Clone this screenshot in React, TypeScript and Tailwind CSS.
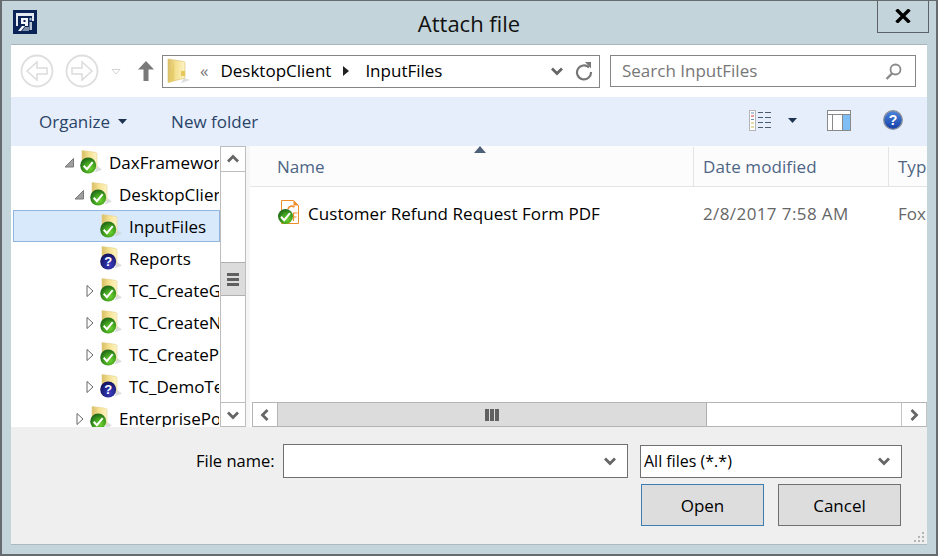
const FONT = "font-['Open_Sans','Noto_Sans',sans-serif]";

function Gradients() {
  return (
    <svg width="0" height="0" className="absolute">
      <defs>
        <radialGradient id="okFill" cx="0.62" cy="0.68" r="0.7">
          <stop offset="0" stopColor="#6fd02e" />
          <stop offset="0.55" stopColor="#3f9f1e" />
          <stop offset="1" stopColor="#1d6418" />
        </radialGradient>
        <radialGradient id="askFill" cx="0.6" cy="0.7" r="0.7">
          <stop offset="0" stopColor="#3a3cc0" />
          <stop offset="1" stopColor="#12125e" />
        </radialGradient>
        <linearGradient id="folderFill" x1="0" y1="0" x2="1" y2="0">
          <stop offset="0" stopColor="#d8bd63" />
          <stop offset="0.45" stopColor="#f5e08e" />
          <stop offset="1" stopColor="#fdf4c6" />
        </linearGradient>
        <linearGradient id="helpFill" x1="0" y1="0" x2="0" y2="1">
          <stop offset="0" stopColor="#4f86dc" />
          <stop offset="1" stopColor="#143fa8" />
        </linearGradient>
      </defs>
    </svg>
  );
}

function Badge({ kind, cx = 8.2, cy = 15.5, r = 8 }: { kind: "ok" | "unknown"; cx?: number; cy?: number; r?: number }) {
  if (kind === "ok") {
    return (
      <g>
        <circle cx={cx} cy={cy} r={r} fill="url(#okFill)" />
        <path
          d={`M${cx - 4.5} ${cy + 0.3}l3.200 3.400 5.800-7`}
          fill="none"
          stroke="#fff"
          strokeWidth="2"
        />
      </g>
    );
  }
  return (
    <g>
      <circle cx={cx} cy={cy} r={r} fill="url(#askFill)" />
      <text x={cx} y={cy + 4.6} textAnchor="middle" fontSize="13" fontWeight="700" fill="#fff" fontFamily="Liberation Sans, sans-serif">
        ?
      </text>
    </g>
  );
}

function FolderBadge({ kind }: { kind: "ok" | "unknown" }) {
  return (
    <svg width="24" height="26" viewBox="0 0 24 26" className="shrink-0">
      <path d="M17 16l5 3.500-7 3z" fill="#cfcfcf" opacity="0.7" />
      <path d="M2 0.500l8 1c4 .5 7 1 7 2V18l-15 3z" fill="url(#folderFill)" stroke="#e3d08e" strokeWidth="0.6" />
      <path d="M6 1.500v19" stroke="#e6d28c" strokeWidth="0.8" opacity="0.7" />
      <Badge kind={kind} />
    </svg>
  );
}

type Row = { label: string; kind: "ok" | "unknown"; arrow?: "open" | "closed"; level: string; selected?: boolean };

const rows: Row[] = [
  { label: "DaxFramework", kind: "ok", arrow: "open", level: "pl-[50px]" },
  { label: "DesktopClient", kind: "ok", arrow: "open", level: "pl-[60px]" },
  { label: "InputFiles", kind: "ok", level: "pl-[70px]", selected: true },
  { label: "Reports", kind: "unknown", level: "pl-[70px]" },
  { label: "TC_CreateGeneral", kind: "ok", arrow: "closed", level: "pl-[70px]" },
  { label: "TC_CreateNew", kind: "ok", arrow: "closed", level: "pl-[70px]" },
  { label: "TC_CreateProject", kind: "ok", arrow: "closed", level: "pl-[70px]" },
  { label: "TC_DemoTest", kind: "unknown", arrow: "closed", level: "pl-[70px]" },
  { label: "EnterprisePortal", kind: "ok", arrow: "closed", level: "pl-[60px]" },
];

function TreeArrow({ type }: { type?: "open" | "closed" }) {
  if (type === "open") {
    return (
      <svg width="12" height="12" viewBox="0 0 12 12" className="shrink-0">
        <path d="M9.500 1.500v8.500H1z" fill="#a0a0a0" stroke="#777" />
      </svg>
    );
  }
  if (type === "closed") {
    return (
      <svg width="12" height="14" viewBox="0 0 12 14" className="shrink-0">
        <path d="M3 1.500l6 5.500-6 5.500z" fill="#fff" stroke="#666" />
      </svg>
    );
  }
  return <span className="w-3 shrink-0" />;
}

function TreeRow({ row }: { row: Row }) {
  return (
    <div
      className={
        "flex h-8 shrink-0 items-center gap-[4px] overflow-hidden whitespace-nowrap border pt-[2px] " +
        row.level +
        (row.selected ? " border-[#8fb5e0] bg-[#d9e9fc]" : " border-transparent")
      }
    >
      <TreeArrow type={row.arrow} />
      <FolderBadge kind={row.kind} />
      <span className="ml-[1px] text-[17px] text-black">{row.label}</span>
    </div>
  );
}

function Chevron({ dir = "down", size = 16 }: { dir?: "down" | "up" | "left" | "right"; size?: number }) {
  const d = {
    down: "M3 5.500l5 5 5-5",
    up: "M3 10.500l5-5 5 5",
    left: "M10.500 3L5.500 8l5 5",
    right: "M5.500 3l5 5-5 5",
  }[dir];
  return (
    <svg width={size} height={size} viewBox="0 0 16 16" className="shrink-0">
      <path d={d} fill="none" stroke="#666" strokeWidth="2.800" />
    </svg>
  );
}

function ScrollGrip({ vertical }: { vertical?: boolean }) {
  return vertical ? (
    <div className="flex flex-col gap-[2px]">
      <div className="h-[3px] w-[12px] bg-[#606060]" />
      <div className="h-[3px] w-[12px] bg-[#606060]" />
      <div className="h-[3px] w-[12px] bg-[#606060]" />
    </div>
  ) : (
    <div className="flex gap-[1px]">
      <div className="h-[12px] w-[4px] bg-[#606060]" />
      <div className="h-[12px] w-[4px] bg-[#606060]" />
      <div className="h-[12px] w-[4px] bg-[#606060]" />
    </div>
  );
}

function NavCircle({ flip }: { flip?: boolean }) {
  return (
    <svg width="34" height="34" viewBox="0 0 34 34" className="shrink-0">
      <circle cx="17" cy="17" r="15.500" fill="#fff" stroke="#dedede" strokeWidth="1.800" />
      <path
        d={flip ? "M7 14h10V8l10 9-10 9v-6H7z" : "M27 14H17V8L7 17l10 9v-6h10z"}
        fill="#fff"
        stroke="#dcdcdc"
        strokeWidth="1.500"
      />
    </svg>
  );
}

function Logo() {
  return (
    <svg width="24" height="24" viewBox="0 0 24 24" className="shrink-0">
      <rect width="24" height="24" fill="#0b2458" />
      <path d="M3 3h18v3H3zM3 6h2v10H3zM19 6h2v5h-2z" fill="#e4e9f2" />
      <path d="M8 8h7v8h-3l-4 5H5l4-5h3v-2H8zM10.500 10v2H12.500v-2z" fill="#f4f6fa" fillRule="evenodd" />
      <path d="M16.500 8h2v2.500h-2zM16.500 12h2.500v8h-2.500z" fill="#b9c4d6" />
      <path d="M12 17h4v4h-7z" fill="#7f8fa8" />
    </svg>
  );
}

function ViewIcon() {
  return (
    <svg width="23" height="21" viewBox="0 0 23 21" className="shrink-0">
      <rect x="0.500" y="0.500" width="6" height="20" fill="#fff" stroke="#b5b5b5" />
      <path d="M2 3h3" stroke="#6b8fb5" />
      <path d="M2 6h3" stroke="#d33" />
      <path d="M2 9.500h3" stroke="#6b8fb5" />
      <path d="M2 13h3" stroke="#c9b94a" />
      <path d="M2 17h3" stroke="#c9b94a" />
      <path d="M9 2.500h5M16 2.500h6M9 7.500h5M16 7.500h6M9 12.500h5M16 12.500h6M9 17.500h5M16 17.500h6" stroke="#4b5c70" strokeWidth="1" />
    </svg>
  );
}

function PaneIcon() {
  return (
    <svg width="24" height="21" viewBox="0 0 24 21" className="shrink-0">
      <rect x="0.500" y="0.500" width="23" height="20" fill="#fff" stroke="#8a8a8a" />
      <path d="M1 4.500h22" stroke="#8a8a8a" />
      <path d="M5.500 5v15M15.500 5v15" stroke="#8a8a8a" />
      <rect x="16" y="5" width="7" height="15" fill="#7fbdf5" />
    </svg>
  );
}

function HelpIcon() {
  return (
    <svg width="20" height="20" viewBox="0 0 20 20" className="shrink-0">
      <circle cx="10" cy="10" r="9.300" fill="url(#helpFill)" stroke="#8c9199" strokeWidth="1.300" />
      <text x="10" y="15" textAnchor="middle" fontSize="14" fontWeight="700" fill="#fff" fontFamily="Liberation Sans, sans-serif">
        ?
      </text>
    </svg>
  );
}

function PdfIcon() {
  return (
    <svg width="24" height="26" viewBox="0 0 24 26" className="mb-[2px] shrink-0">
      <path d="M4.500 .500h12l5 5v18h-17z" fill="#fff" stroke="#ee8f2a" />
      <path d="M16.500 .500v5h5z" fill="#ee8f2a" />
      <path d="M11 9c1-3 4-3.500 6.500-2" fill="none" stroke="#ee8f2a" strokeWidth="1.600" />
      <path d="M16.500 21v-8h4M16.500 17h3" fill="none" stroke="#ee8f2a" strokeWidth="1.200" />
      <Badge kind="ok" cx={8.5} cy={16.5} r={7.5} />
    </svg>
  );
}

function Grip() {
  return (
    <svg width="11" height="11" viewBox="0 0 11 11">
      <path d="M8 0h2v2H8zM4 4h2v2H4zM8 4h2v2H8zM0 8h2v2H0zM4 8h2v2H4zM8 8h2v2H8z" fill="#b4b4b4" />
    </svg>
  );
}

export default function App() {
  return (
    <div className={"flex h-[556px] w-[938px] flex-col overflow-hidden border-x-2 border-t border-b-2 border-[#666b70] bg-[#c3d5db] " + FONT}>
      <Gradients />

      {/* title bar */}
      <div className="grid h-[43px] shrink-0 grid-cols-[1fr_auto_1fr]">
        <div className="pl-[11px] pt-[9px]">
          <Logo />
        </div>
        <div className="pt-[7px] text-[22px] leading-[30px] text-[#111]">Attach file</div>
        <div className="flex justify-end">
          <div className="mr-[7px] flex h-[32px] w-[52px] items-start justify-center border-x border-b border-[#5c6268] pt-[8px]">
            <svg width="16" height="14" viewBox="0 0 16 14">
              <path d="M1.500 0.500L14.500 13.500M14.500 0.500L1.500 13.500" stroke="#000" strokeWidth="3.400" />
            </svg>
          </div>
        </div>
      </div>

      {/* dialog body */}
      <div className="mx-[9px] flex flex-1 flex-col border-t border-[#a9b4ba] bg-white">
        {/* nav row */}
        <div className="flex h-[52px] shrink-0 items-center pl-[9px] pr-[11px]">
          <NavCircle />
          <div className="ml-[11px]">
            <NavCircle flip />
          </div>
          <svg width="10" height="6" viewBox="0 0 10 6" className="ml-[12px] mt-[2px]">
            <path d="M1 .500h8L5 5z" fill="#fff" stroke="#d4d4d4" />
          </svg>
          <svg width="16" height="20" viewBox="0 0 16 20" className="ml-[17px]">
            <path d="M8 0l8 8.500h-5.500V20h-5V8.500H0z" fill="#7a7a7a" />
          </svg>
          <div className="ml-[8px] flex h-[33px] w-[438px] items-center border border-[#858585] pl-[4px] pr-[6px] text-[17px] text-black">
            <svg width="24" height="26" viewBox="0 0 24 26" className="shrink-0">
              <path d="M17 20l6 2-9 3z" fill="#cfcfcf" opacity="0.7" />
              <path d="M1 1l9 1.500c5 .6 8 1 8 2V20l-17 4.500z" fill="url(#folderFill)" stroke="#dcc578" strokeWidth="0.700" />
              <path d="M7 3v20l-5 1.500z" fill="#e7cc6c" />
              <path d="M14 13h4v5h-4z" fill="#e6c85a" />
            </svg>
            <span className="ml-[9px] text-[#777]">«</span>
            <span className="ml-[12px]">DesktopClient</span>
            <svg width="7" height="10" viewBox="0 0 7 10" className="ml-[11px]">
              <path d="M1 0l6 5-6 5z" fill="#222" />
            </svg>
            <span className="ml-[16px]">InputFiles</span>
            <div className="ml-auto">
              <Chevron />
            </div>
            <svg width="18" height="20" viewBox="0 0 18 20" className="ml-[10px]">
              <path d="M14 6.500A7 7 0 1 0 16 11" fill="none" stroke="#777" strokeWidth="2.200" />
              <path d="M10 1h6v6.500z" fill="#777" />
            </svg>
          </div>
          <div className="ml-auto flex h-[32px] w-[306px] items-center justify-between border border-[#858585] pl-[11px] pr-[13px] text-[17px] text-[#777]">
            <span>Search InputFiles</span>
            <svg width="17" height="17" viewBox="0 0 17 17">
              <circle cx="10.500" cy="6.500" r="5" fill="none" stroke="#8a8a8a" strokeWidth="1.800" />
              <path d="M7 10.500L1.500 16" stroke="#8a8a8a" strokeWidth="2.400" />
            </svg>
          </div>
        </div>

        {/* command bar */}
        <div className="flex h-[49px] shrink-0 items-center bg-[#e6eefc] pl-[28px] text-[17px] text-[#2a4468]">
          <span>Organize</span>
          <svg width="9" height="5" viewBox="0 0 9 5" className="ml-[8px]">
            <path d="M0 0h9L4.500 5z" fill="#1e3350" />
          </svg>
          <span className="ml-[44px]">New folder</span>
          <div className="ml-auto mb-[3px] flex items-center pr-[24px]">
            <ViewIcon />
            <svg width="9" height="5" viewBox="0 0 9 5" className="ml-[16px]">
              <path d="M0 0h9L4.500 5z" fill="#1e3350" />
            </svg>
            <div className="ml-[30px]">
              <PaneIcon />
            </div>
            <div className="ml-[32px]">
              <HelpIcon />
            </div>
          </div>
        </div>

        {/* tree and file list */}
        <div className="flex h-[281px] shrink-0 bg-[#f6f6f6]">
          <div className="flex w-[209px] shrink-0 flex-col overflow-hidden bg-white pl-[2px]">
            {rows.map((row) => (
              <TreeRow key={row.label} row={row} />
            ))}
          </div>
          <div className="flex w-[26px] shrink-0 flex-col border-x border-[#bdbdbd] bg-white">
            <div className="flex h-[26px] shrink-0 items-center justify-center border-y border-[#bdbdbd]">
              <Chevron dir="up" />
            </div>
            <div className="mt-[90px] flex h-[34px] shrink-0 items-center justify-center border-y border-[#b0b0b0] bg-[#dcdcdc]">
              <ScrollGrip vertical />
            </div>
            <div className="mt-auto flex h-[25px] shrink-0 items-center justify-center border-y border-[#bdbdbd]">
              <Chevron />
            </div>
          </div>

          <div className="ml-[4px] flex min-w-0 flex-1 flex-col bg-white">
            <div className="relative flex h-[41px] shrink-0 border-b border-[#e2e4e8] bg-[#fcfcfc] pt-[1px] text-[17px] text-[#4d6585]">
              <svg width="12" height="7" viewBox="0 0 12 7" className="absolute left-[224px] top-0">
                <path d="M6 0l6 7H0z" fill="#4d6078" />
              </svg>
              <div className="flex w-[444px] shrink-0 items-center border-r border-[#e2e4e8] pl-[27px]">Name</div>
              <div className="flex w-[195px] shrink-0 items-center border-r border-[#e2e4e8] pl-[9px] tracking-[0.1px]">Date modified</div>
              <div className="flex items-center overflow-hidden pl-[9px]">Type</div>
            </div>
            <div className="flex h-[54px] shrink-0 items-center whitespace-nowrap text-[17px] text-black">
              <div className="flex w-[444px] shrink-0 items-center pl-[27px]">
                <PdfIcon />
                <span className="ml-[7px] tracking-[0.06px]">Customer Refund Request Form PDF</span>
              </div>
              <div className="w-[195px] shrink-0 pl-[9px] tracking-[0.4px] text-[#666]">2/8/2017 7:58 AM</div>
              <div className="overflow-hidden pl-[9px] text-[#666]">Fox</div>
            </div>
            <div className="mt-auto ml-[2px] flex h-[25px] shrink-0 border-y border-[#b5b5b5]">
              <div className="flex w-[26px] shrink-0 items-center justify-center border-x border-[#b5b5b5]">
                <Chevron dir="left" />
              </div>
              <div className="flex w-[429px] shrink-0 items-center justify-center border-r border-[#b0b0b0] bg-[#dcdcdc]">
                <ScrollGrip />
              </div>
              <div className="ml-auto flex w-[26px] shrink-0 items-center justify-center border-x border-[#c4c4c4]">
                <Chevron dir="right" />
              </div>
            </div>
          </div>
        </div>

        {/* bottom form */}
        <div className="relative flex flex-1 flex-col border-b border-[#adb9bf] bg-[#efefef] pt-[17px] text-[17px] text-black">
          <div className="flex items-center">
            <span className="ml-[185px] w-[87px] text-[16.5px]">File name:</span>
            <div className="flex h-[34px] w-[345px] items-center justify-end border border-[#707070] bg-white pr-[9px]">
              <Chevron />
            </div>
            <div className="ml-[12px] flex h-[33px] w-[262px] items-center justify-between border border-[#707070] bg-white pl-[3px] pr-[9px]">
              <span className="text-[16px]">All files (*.*)</span>
              <Chevron />
            </div>
          </div>
          <div className="mt-[6px] flex justify-end gap-[14px] pr-[26px]">
            <button type="button" className="h-[42px] w-[123px] border border-[#3f7cb0] bg-[#dddddd] pt-[1px]">
              Open
            </button>
            <button type="button" className="h-[42px] w-[123px] border border-[#707070] bg-[#dddddd] pt-[1px]">
              Cancel
            </button>
          </div>
          <div className="absolute bottom-[1px] right-[2px]">
            <Grip />
          </div>
        </div>
      </div>
      <div className="h-[9px] shrink-0" />
    </div>
  );
}
